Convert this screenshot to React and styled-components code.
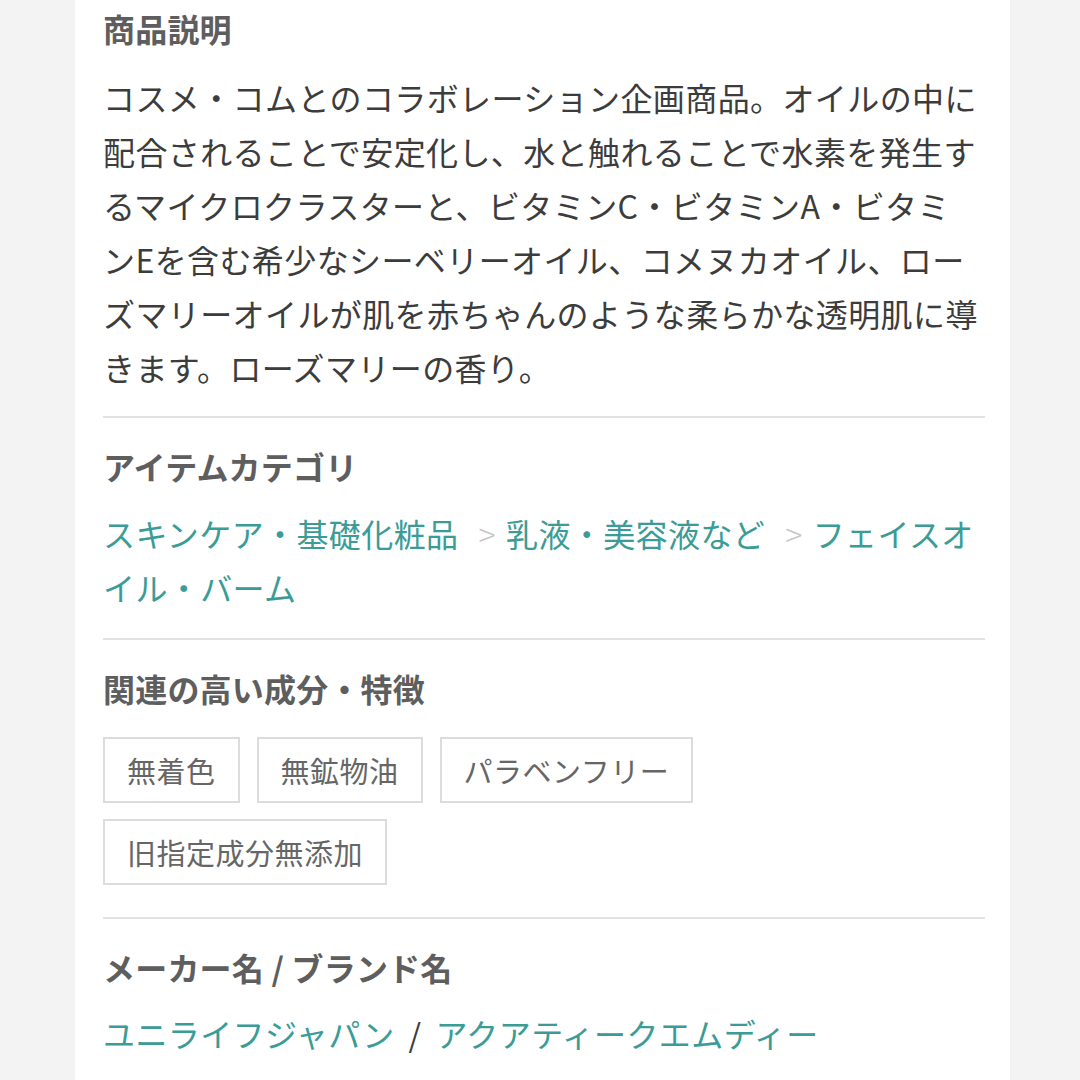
import styled, { createGlobalStyle } from "styled-components"

const GlobalStyle = createGlobalStyle`
    body {
        margin: 0;
        background: #f3f3f3;
        font-family: "Noto Sans CJK JP", "Noto Sans", sans-serif;
    }
`

const tags = ["無着色", "無鉱物油", "パラベンフリー", "旧指定成分無添加"]

export default function App(){
    return(
        <>
            <GlobalStyle />
            <Page>
                <Panel>
                    <Section top={4} bottom={22}>
                        <Heading>商品説明</Heading>
                        <Body>
                            コスメ・コムとのコラボレーション企画商品。オイルの中に<br />
                            配合されることで安定化し、水と触れることで水素を発生す<br />
                            るマイクロクラスターと、ビタミンC・ビタミンA・ビタミ<br />
                            ンEを含む希少なシーベリーオイル、コメヌカオイル、ロー<br />
                            ズマリーオイルが肌を赤ちゃんのような柔らかな透明肌に導<br />
                            きます。ローズマリーの香り。
                        </Body>
                    </Section>
                    <Section top={24} bottom={24}>
                        <Heading>アイテムカテゴリ</Heading>
                        <LinkLine gap={16}>
                            <Link>スキンケア・基礎化粧品</Link>
                            <Sep>&gt;</Sep>
                            <Link>乳液・美容液など</Link>
                            <Sep>&gt;</Sep>
                            <Link>フェイスオイル・バーム</Link>
                        </LinkLine>
                    </Section>
                    <Section top={24} bottom={32}>
                        <Heading>関連の高い成分・特徴</Heading>
                        <TagList>
                            {tags.map(t => <Tag key={t}>{t}</Tag>)}
                        </TagList>
                    </Section>
                    <Section top={24} bottom={20} last>
                        <Heading>メーカー名 / ブランド名</Heading>
                        <LinkLine gap={15}>
                            <Link>ユニライフジャパン</Link>
                            <Slash>/</Slash>
                            <Link>アクアティークエムディー</Link>
                        </LinkLine>
                    </Section>
                </Panel>
            </Page>
        </>
    )
}

const Page = styled.div`
    padding-left: 75px;
    min-height: 1080px;
`
const Panel = styled.main`
    width: 935px;
    min-height: 1080px;
    box-sizing: border-box;
    background: #ffffff;
    padding: 0 25px 0 28px;
`
const Section = styled.section`
    padding-top: ${p => p.top}px;
    padding-bottom: ${p => p.bottom}px;
    border-bottom: ${p => p.last ? "none" : "2px solid #e2e2e2"};
`
const Heading = styled.h2`
    margin: 0;
    font-size: 32px;
    line-height: 48px;
    font-weight: 700;
    color: #5e5e5e;
    letter-spacing: 0.2px;
`
const Body = styled.p`
    margin: 18px 0 0;
    font-size: 32px;
    line-height: 54px;
    letter-spacing: 0.4px;
    color: #3c3c3c;
`
const LinkLine = styled.p`
    margin: ${p => p.gap}px 0 0;
    font-size: 32px;
    line-height: 54px;
    letter-spacing: 0.4px;
`
const Link = styled.span`
    color: #3b9c97;
`
const Sep = styled.span`
    color: #c6c6c6;
    font-weight: 300;
    margin: 0 10px 0 20px;
`
const Slash = styled.span`
    color: #3c3c3c;
    margin: 0 14px;
`
const TagList = styled.div`
    display: flex;
    flex-wrap: wrap;
    gap: 16px 17px;
    margin-top: 25px;
`
const Tag = styled.span`
    box-sizing: border-box;
    height: 66px;
    display: flex;
    align-items: center;
    padding: 0 22px;
    border: 2px solid #dcdcdc;
    font-size: 29px;
    letter-spacing: 0.5px;
    color: #666666;
`
